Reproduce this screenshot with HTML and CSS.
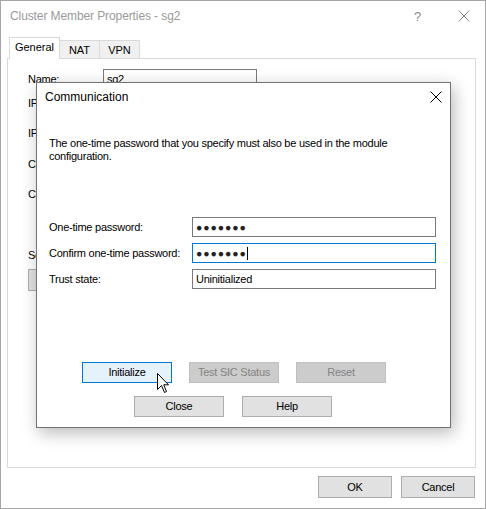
FILE: index.html
```html
<!DOCTYPE html>
<html>
<head>
<meta charset="utf-8">
<link rel="stylesheet" href="styles.css">
</head>
<body>
<div class="window">
  <div class="titlebar">
    <span class="title">Cluster Member Properties - sg2</span>
    <span class="tb-help">?</span>
    <svg class="tb-close" width="12" height="12" viewBox="0 0 12 12"><path d="M0.5 0.5 L11.5 11.5 M11.5 0.5 L0.5 11.5" stroke="#8a8a8a" stroke-width="1" fill="none"/></svg>
  </div>
  <div class="tabs">
    <div class="tabstrip">
      <div class="tab active">General</div>
      <div class="tab">NAT</div>
      <div class="tab">VPN</div>
    </div>
    <div class="tabpage">
      <div class="name-row"><span class="lbl">Name:</span><span class="field">sg2</span></div>
      <div class="plain r-ip1">IPv4 Address:</div>
      <div class="plain r-ip2">IPv6 Address:</div>
      <div class="plain r-c1">Comment:</div>
      <div class="plain r-c2">Color:</div>
      <div class="plain r-se">Secure Internal Communication:</div>
      <div class="btn under-btn">Communication...</div>
    </div>
  </div>
  <div class="footer">
    <div class="btn foot-btn">OK</div>
    <div class="btn foot-btn">Cancel</div>
  </div>

  <div class="dialog">
    <div class="dlg-title">
      <span>Communication</span>
      <svg class="dlg-close" width="12" height="12" viewBox="0 0 12 12"><path d="M0.5 0.5 L11.5 11.5 M11.5 0.5 L0.5 11.5" stroke="#000" stroke-width="1" fill="none"/></svg>
    </div>
    <div class="dlg-body">
      <p class="intro">The one-time password that you specify must also be used in the module configuration.</p>
      <div class="form">
        <div class="frow"><span class="flbl">One-time password:</span><span class="input"><span class="dots">●●●●●●●</span></span></div>
        <div class="frow"><span class="flbl">Confirm one-time password:</span><span class="input focus"><span class="dots">●●●●●●●</span><span class="caret"></span></span></div>
        <div class="frow"><span class="flbl">Trust state:</span><span class="input">Uninitialized</span></div>
      </div>
      <div class="brow1">
        <div class="btn dbtn hot">Initialize</div>
        <div class="btn dbtn disabled">Test SIC Status</div>
        <div class="btn dbtn disabled">Reset</div>
      </div>
      <div class="brow2">
        <div class="btn dbtn">Close</div>
        <div class="btn dbtn">Help</div>
      </div>
    </div>
    <svg class="cursor" width="13" height="21" viewBox="0 0 13 21"><path d="M0.5 0.5 L0.5 16.5 L4.5 12.5 L7.5 19.5 L9.5 18.5 L6.7 11.8 L11.5 11.8 Z" fill="#fff" stroke="#000" stroke-width="1" stroke-linejoin="miter"/></svg>
  </div>
</div>
</body>
</html>
```

FILE: styles.css
```css
html, body {
  margin: 0;
  padding: 0;
  background: #fff;
}
body {
  font-family: "Liberation Sans", Arial, sans-serif;
  font-size: 11px;
  letter-spacing: -0.25px;
  color: #000;
}
.window {
  position: relative;
  width: 486px;
  height: 509px;
  box-sizing: border-box;
  border: 1px solid #a6a6a6;
  background: #fff;
  display: flex;
  flex-direction: column;
}
.titlebar {
  height: 30px;
  display: flex;
  align-items: center;
  padding-left: 9px;
  padding-right: 15px;
}
.title {
  font-family: "Liberation Sans", Arial, sans-serif;
  font-size: 12px;
  letter-spacing: -0.1px;
  color: #9a9a9a;
  flex: 1;
}
.tb-help {
  font-size: 13px;
  color: #8a8a8a;
  margin-right: 37px;
}
.tabs {
  margin-top: 6px;
  padding-left: 6px;
}
.tabstrip {
  display: flex;
  align-items: flex-end;
  height: 21px;
  padding-left: 2px;
}
.tab {
  width: 41px;
  height: 18px;
  box-sizing: border-box;
  border: 1px solid #d9d9d9;
  border-bottom: none;
  background: #f0f0f0;
  text-align: center;
  line-height: 18px;
  font-size: 11px;
  letter-spacing: 0;
  margin-left: -1px;
}
.tab:first-child { margin-left: 0; }
.tab.active {
  width: 51px;
  background: #fff;
  line-height: 19px;
  position: relative;
  z-index: 1;
  margin-bottom: -1px;
  height: 22px;
}
.tabpage {
  width: 469px;
  height: 410px;
  box-sizing: border-box;
  border: 1px solid #d9d9d9;
  background: #fff;
  padding-left: 20px;
  padding-top: 10px;
}
.name-row {
  display: flex;
  height: 20px;
  align-items: center;
}
.lbl { width: 75px; }
.field {
  width: 154px;
  height: 20px;
  box-sizing: border-box;
  border: 1px solid #7a7a7a;
  padding-left: 3px;
  line-height: 18px;
}
.plain { line-height: 20px; }
.r-ip1 { margin-top: 4px; }
.r-ip2 { margin-top: 10px; }
.r-c1 { margin-top: 11px; }
.r-c2 { margin-top: 10px; }
.r-se { margin-top: 41px; }
.under-btn {
  margin-top: 4px;
  width: 120px;
  height: 22px;
}
.btn {
  box-sizing: border-box;
  border: 1px solid #adadad;
  background: #e1e1e1;
  text-align: center;
  font-size: 11px;
  color: #000;
}
.footer {
  display: flex;
  justify-content: flex-end;
  gap: 9px;
  margin-top: 8px;
  padding-right: 10px;
}
.foot-btn {
  width: 74px;
  height: 22px;
  line-height: 20px;
}

/* Dialog */
.dialog {
  position: absolute;
  left: 35px;
  top: 81px;
  width: 415px;
  height: 346px;
  box-sizing: border-box;
  border: 1px solid #727272;
  background: #fff;
  box-shadow: 3px 5px 16px rgba(0,0,0,0.28);
}
.dlg-title {
  height: 28px;
  display: flex;
  align-items: center;
  justify-content: space-between;
  padding-left: 8px;
  padding-right: 8px;
  font-family: "Liberation Sans", Arial, sans-serif;
  font-size: 12px;
  letter-spacing: 0;
}
.dlg-body {
  padding-left: 12px;
}
.intro {
  margin: 0;
  padding-top: 26px;
  width: 390px;
  line-height: 13px;
}
.form {
  margin-top: 54px;
  display: flex;
  flex-direction: column;
  gap: 6px;
}
.frow {
  display: flex;
  align-items: center;
  height: 20px;
}
.flbl { width: 143px; }
.input {
  width: 244px;
  height: 20px;
  box-sizing: border-box;
  border: 1px solid #7a7a7a;
  padding-left: 3px;
  line-height: 18px;
  display: flex;
  align-items: center;
}
.input.focus { border-color: #0078d7; }
.dots {
  font-size: 10.5px;
  letter-spacing: 0.9px;
  color: #222;
}
.caret {
  width: 1px;
  height: 13px;
  background: #000;
  margin-left: 0;
}
.brow1 {
  margin-top: 73px;
  display: flex;
  gap: 17px;
  padding-left: 33px;
}
.brow2 {
  margin-top: 13px;
  display: flex;
  gap: 18px;
  padding-left: 85px;
}
.dbtn {
  width: 90px;
  height: 21px;
  line-height: 19px;
}
.dbtn.hot {
  background: #e5f1fb;
  border-color: #0078d7;
}
.dbtn.disabled {
  background: #cccccc;
  border-color: #bfbfbf;
  color: #838383;
}
.cursor {
  position: absolute;
  left: 120px;
  top: 290px;
}
```
